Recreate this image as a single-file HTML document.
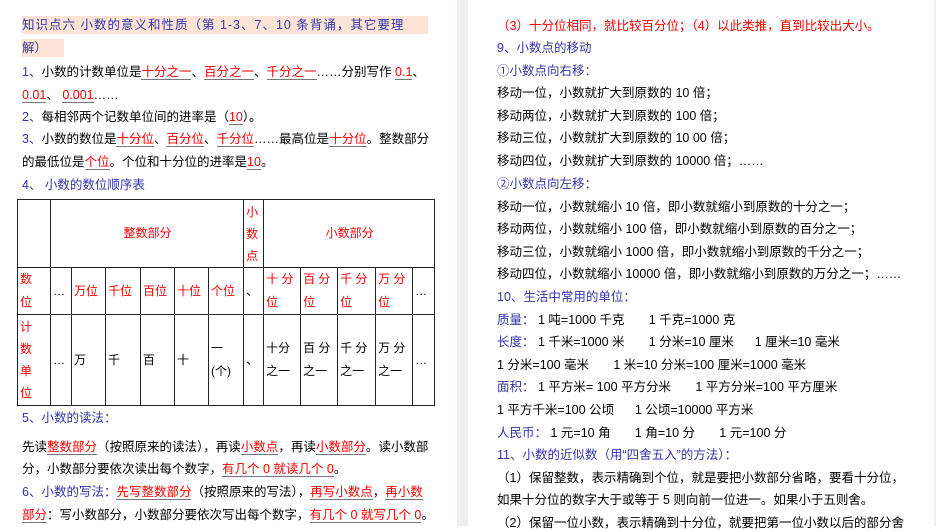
<!DOCTYPE html>
<html><head><meta charset="utf-8"><style>
body{margin:0;width:936px;height:526px;overflow:hidden;background:#fff;font-family:"Liberation Sans","Noto Sans CJK SC",sans-serif;font-size:12.5px;color:#000;position:relative}
.gap{position:absolute;left:457px;top:0;width:11px;height:526px;background:#eceef2}
.gap2{position:absolute;left:934px;top:0;width:2px;height:526px;background:#eceef2}
.l{position:absolute;white-space:nowrap;line-height:18px}
.b{color:#3535a8}.r{color:#f00}
u{text-decoration:none;border-bottom:1px solid #777;color:#f00}
.hl{background:#fbe4d6;color:#3535a8}
table{position:absolute;left:17px;top:199px;border-collapse:collapse;font-size:12px;table-layout:fixed;width:417px}
td{border:1.5px solid #222;padding:0 1px 0 2px;vertical-align:middle;line-height:23px;overflow:hidden;white-space:nowrap}
.rd{color:#f00}
</style></head><body>
<div class="gap"></div><div class="gap2"></div>
<div class="l" style="left:22px;top:16px"><span class="hl" style="display:inline-block;width:406px;letter-spacing:1px">知识点六 小数的意义和性质（第 1-3、7、10 条背诵，其它要理</span></div>
<div class="l" style="left:22px;top:39px"><span class="hl" style="display:inline-block;width:42px">解）</span></div>
<div class="l" style="left:22px;top:63px"><span class="b">1、</span>小数的计数单位是<u>十分之一</u>、<u>百分之一</u>、<u>千分之一</u>……分别写作 <u>0.1</u>、</div>
<div class="l" style="left:22px;top:86px"><u>0.01</u>、 <u>0.001</u>……</div>
<div class="l" style="left:22px;top:108px"><span class="b">2、</span>每相邻两个记数单位间的进率是（<u>10</u>）。</div>
<div class="l" style="left:22px;top:130px"><span class="b">3、</span>小数的数位是<u>十分位</u>、<u>百分位</u>、<u>千分位</u>……最高位是<u>十分位</u>。整数部分</div>
<div class="l" style="left:22px;top:153px">的最低位是<u>个位</u>。个位和十分位的进率是<u>10</u>。</div>
<div class="l b" style="left:22px;top:176px">4、 小数的数位顺序表</div>
<table>
<colgroup><col style="width:33px"><col style="width:21px"><col style="width:34px"><col style="width:35px"><col style="width:34px"><col style="width:34px"><col style="width:35px"><col style="width:20px"><col style="width:37px"><col style="width:37px"><col style="width:38px"><col style="width:37px"><col style="width:22px"></colgroup>
<tr style="height:68px"><td></td><td colspan="6" class="rd" style="text-align:center">整数部分</td><td class="rd" style="line-height:22px">小<br>数<br>点</td><td colspan="5" class="rd" style="text-align:center">小数部分</td></tr>
<tr style="height:46px" class="rd"><td>数<br>位</td><td style="color:#000">…</td><td>万位</td><td>千位</td><td>百位</td><td>十位</td><td>个位</td><td style="color:#000">、</td><td>十 分<br>位</td><td>百 分<br>位</td><td>千 分<br>位</td><td>万 分<br>位</td><td style="color:#000">…</td></tr>
<tr style="height:91px"><td class="rd" style="line-height:22px">计<br>数<br>单<br>位</td><td>…</td><td>万</td><td>千</td><td>百</td><td>十</td><td>一<br>(个)</td><td>、</td><td>十分<br>之一</td><td>百 分<br>之一</td><td>千 分<br>之一</td><td>万 分<br>之一</td><td>…</td></tr>
</table>
<div class="l b" style="left:22px;top:409px">5、小数的读法：</div>
<div class="l" style="left:22px;top:438px">先读<u>整数部分</u>（按照原来的读法），再读<u>小数点</u>，再读<u>小数部分</u>。读小数部</div>
<div class="l" style="left:22px;top:460px">分，小数部分要依次读出每个数字，<u>有几个 0 就读几个 0</u>。</div>
<div class="l" style="left:22px;top:483px"><span class="b">6、小数的写法：</span><u>先写整数部分</u>（按照原来的写法），<u>再写小数点</u>，<u>再小数</u></div>
<div class="l" style="left:22px;top:506px"><u>部分</u>：写小数部分，小数部分要依次写出每个数字，<u>有几个 0 就写几个 0</u>。</div>

<div class="l r" style="left:497px;top:17px">（3）十分位相同，就比较百分位；（4）以此类推，直到比较出大小。</div>
<div class="l b" style="left:497px;top:39px">9、小数点的移动</div>
<div class="l b" style="left:497px;top:62px">①小数点向右移：</div>
<div class="l" style="left:497px;top:84px">移动一位，小数就扩大到原数的 10 倍；</div>
<div class="l" style="left:497px;top:107px">移动两位，小数就扩大到原数的 100 倍；</div>
<div class="l" style="left:497px;top:129px">移动三位，小数就扩大到原数的 10 00 倍；</div>
<div class="l" style="left:497px;top:152px">移动四位，小数就扩大到原数的 10000 倍；……</div>
<div class="l b" style="left:497px;top:175px">②小数点向左移：</div>
<div class="l" style="left:497px;top:198px">移动一位，小数就缩小 10 倍，即小数就缩小到原数的十分之一；</div>
<div class="l" style="left:497px;top:220px">移动两位，小数就缩小 100 倍，即小数就缩小到原数的百分之一；</div>
<div class="l" style="left:497px;top:243px">移动三位，小数就缩小 1000 倍，即小数就缩小到原数的千分之一；</div>
<div class="l" style="left:497px;top:265px">移动四位，小数就缩小 10000 倍，即小数就缩小到原数的万分之一；……</div>
<div class="l b" style="left:497px;top:288px">10、生活中常用的单位：</div>
<div class="l" style="left:497px;top:311px"><span class="b">质量：</span> 1 吨=1000 千克&nbsp;&nbsp;&nbsp;&nbsp;&nbsp;&nbsp;&nbsp;1 千克=1000 克</div>
<div class="l" style="left:497px;top:333px"><span class="b">长度：</span> 1 千米=1000 米&nbsp;&nbsp;&nbsp;&nbsp;&nbsp;&nbsp;&nbsp;1 分米=10 厘米&nbsp;&nbsp;&nbsp;&nbsp;&nbsp;&nbsp;1 厘米=10 毫米</div>
<div class="l" style="left:497px;top:356px">1 分米=100 毫米&nbsp;&nbsp;&nbsp;&nbsp;&nbsp;&nbsp;&nbsp;1 米=10 分米=100 厘米=1000 毫米</div>
<div class="l" style="left:497px;top:378px"><span class="b">面积：</span> 1 平方米= 100 平方分米&nbsp;&nbsp;&nbsp;&nbsp;&nbsp;&nbsp;&nbsp;1 平方分米=100 平方厘米</div>
<div class="l" style="left:497px;top:401px">1 平方千米=100 公顷&nbsp;&nbsp;&nbsp;&nbsp;&nbsp;&nbsp;1 公顷=10000 平方米</div>
<div class="l" style="left:497px;top:424px"><span class="b">人民币：</span> 1 元=10 角&nbsp;&nbsp;&nbsp;&nbsp;&nbsp;&nbsp;&nbsp;1 角=10 分&nbsp;&nbsp;&nbsp;&nbsp;&nbsp;&nbsp;&nbsp;1 元=100 分</div>
<div class="l b" style="left:497px;top:446px">11、小数的近似数（用“四舍五入”的方法）：</div>
<div class="l" style="left:497px;top:469px">（1）保留整数，表示精确到个位，就是要把小数部分省略，要看十分位，</div>
<div class="l" style="left:497px;top:491px">如果十分位的数字大于或等于 5 则向前一位进一。如果小于五则舍。</div>
<div class="l" style="left:497px;top:514px">（2）保留一位小数，表示精确到十分位，就要把第一位小数以后的部分舍</div>
</body></html>
